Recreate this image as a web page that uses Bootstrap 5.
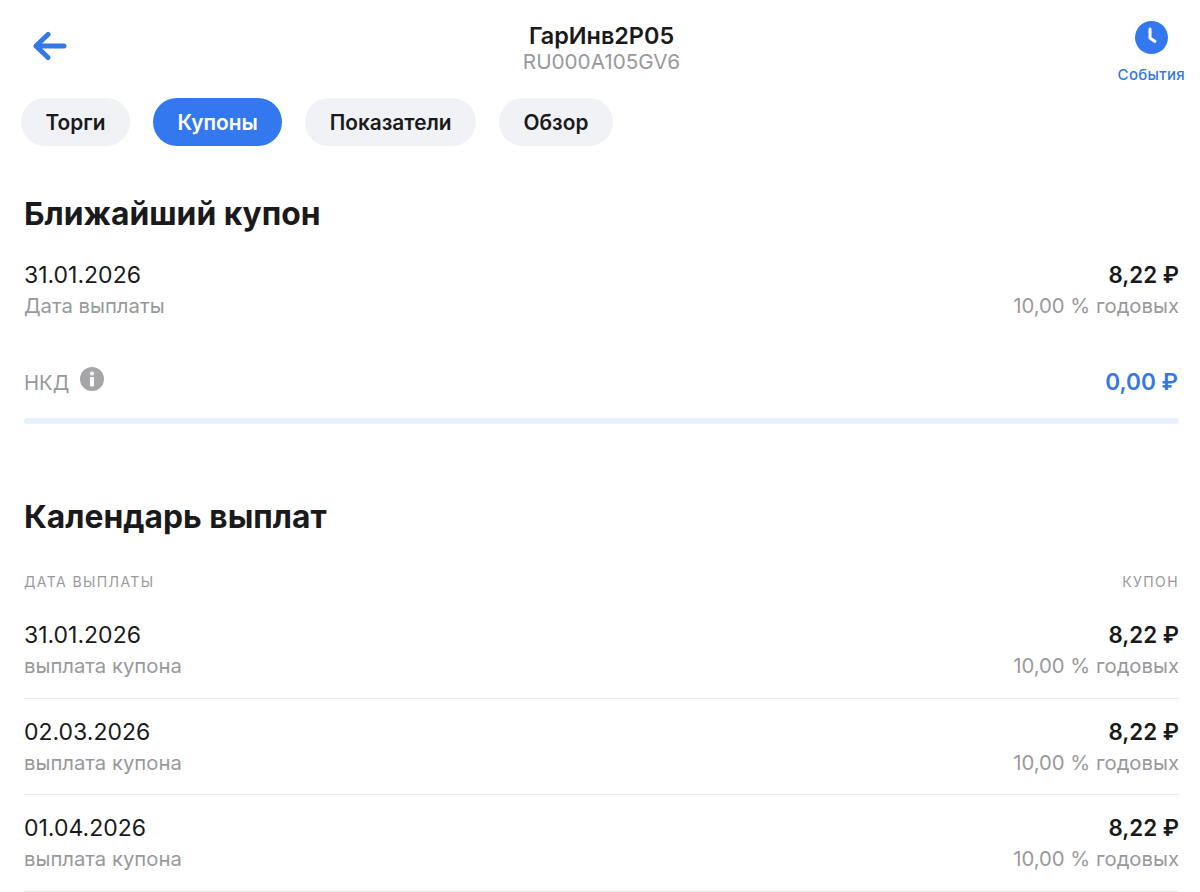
<!DOCTYPE html>
<html lang="ru">
<head>
  <meta charset="UTF-8" />
  <meta name="viewport" content="width=device-width, initial-scale=1" />
  <title>ГарИнв2Р05</title>
  <link href="https://cdn.jsdelivr.net/npm/bootstrap@5.3.3/dist/css/bootstrap.min.css" rel="stylesheet" />
  <style>
    body { font-family: Inter, "Noto Sans", sans-serif; color: #1a1a1c; background: #fff; height: 892px; overflow: hidden; }
    .top-bar { height: 98px; padding: 0 15px 0 32px; }
    .back-link { width: 36px; margin-top: 31px; }
    .title-box { top: 21px; left: 0; right: 0; padding-left: 3px; }
    .bond-name { font-size: 23.400px; font-weight: 600; line-height: 30px; }
    .bond-isin { font-size: 20.700px; line-height: 22px; color: #98999c; }
    .events-link { margin-top: 21px; color: #3478e5; font-size: 15px; font-weight: 500; letter-spacing: .3px; line-height: 18px; gap: 12px; }
    .tabs-row { gap: 23px; padding-left: 21px; height: 48px; }
    .tab-pill { height: 48px; padding: 1px 24.500px 0; border-radius: 24px; border: 0; background: #f1f2f5; color: #1a1a1c; font-size: 20.800px; font-weight: 600; }
    .tab-pill.on { background: #3478f0; color: #fff; }
    .page-body { padding: 0 21px 0 24px; }
    .block-title { font-size: 31.800px; font-weight: 700; line-height: 40px; margin: 0; }
    .near-title { margin-top: 48px; }
    .coupon-top { margin-top: 26px; }
    .cal-title { margin-top: 73px; }
    .main-line { font-size: 23px; line-height: 30px; }
    .sub-line { font-size: 20.300px; line-height: 31px; color: #98999c; }
    .money { font-size: 22.300px; font-weight: 600; }
    .nkd-row { margin-top: 41px; height: 40px; }
    .nkd-value { color: #3478e5; font-size: 22.600px; font-weight: 600; padding-right: 1px; }
    .info-dot { margin-left: 11px; margin-top: -7px; }
    .progress-line { height: 6px; margin-top: 16px; border-radius: 3px; background: #e8f0fc; }
    .head-row { font-size: 14px; line-height: 18px; letter-spacing: 1.400px; color: #98999c; margin-top: 36px; margin-bottom: 11px; }
    .pay-row { height: 96.700px; padding-top: 18px; border-bottom: 1px solid #e9e9eb; }
  </style>
</head>
<body>

<!-- Header -->
<header class="top-bar d-flex justify-content-between align-items-start position-relative">
  <a href="#" class="back-link d-block">
    <svg width="36" height="32" viewBox="0 0 36 32" fill="none" stroke="#3478e5" stroke-width="5" stroke-linecap="round" stroke-linejoin="round">
      <path d="M4 15H32M16 3.500L4 15L16 26.500"/>
    </svg>
  </a>
  <div class="title-box position-absolute text-center">
    <div class="bond-name">ГарИнв2Р05</div>
    <div class="bond-isin">RU000A105GV6</div>
  </div>
  <a href="#" class="events-link text-decoration-none text-center d-flex flex-column align-items-center position-relative">
    <svg width="33" height="33" viewBox="0 0 33 33">
      <circle cx="16.500" cy="16.500" r="16.500" fill="#3478f0"/>
      <path d="M15 8V17L20 20.500" fill="none" stroke="#fff" stroke-width="3" stroke-linecap="round" stroke-linejoin="round"/>
    </svg>
    <span>События</span>
  </a>
</header>

<!-- Tabs -->
<div class="tabs-row d-flex">
  <button class="tab-pill">Торги</button>
  <button class="tab-pill on">Купоны</button>
  <button class="tab-pill">Показатели</button>
  <button class="tab-pill">Обзор</button>
</div>

<main class="page-body">
  <h2 class="block-title near-title">Ближайший купон</h2>
  <div class="d-flex justify-content-between coupon-top">
    <div>
      <div class="main-line">31.01.2026</div>
      <div class="sub-line">Дата выплаты</div>
    </div>
    <div class="text-end">
      <div class="main-line money">8,22 ₽</div>
      <div class="sub-line">10,00 % годовых</div>
    </div>
  </div>

  <div class="nkd-row d-flex justify-content-between align-items-center">
    <div class="sub-line d-flex align-items-center">НКД
      <svg class="info-dot" width="24" height="24" viewBox="0 0 24 24">
        <circle cx="12" cy="12" r="12" fill="#a6a6a8"/>
        <circle cx="12" cy="6.500" r="2" fill="#fff"/>
        <rect x="10" y="10" width="4" height="9.500" rx="1" fill="#fff"/>
      </svg>
    </div>
    <div class="nkd-value">0,00 ₽</div>
  </div>
  <div class="progress-line"></div>

  <h2 class="block-title cal-title">Календарь выплат</h2>
  <div class="head-row d-flex justify-content-between text-uppercase">
    <span>Дата выплаты</span>
    <span>Купон</span>
  </div>

  <div id="payList"></div>
</main>

<script>
const payments = ["31.01.2026", "02.03.2026", "01.04.2026"];
const payList = document.getElementById("payList");
payments.forEach(date => {
  payList.insertAdjacentHTML("beforeend", `
    <div class="pay-row d-flex justify-content-between">
      <div>
        <div class="main-line">${date}</div>
        <div class="sub-line">выплата купона</div>
      </div>
      <div class="text-end">
        <div class="main-line money">8,22 ₽</div>
        <div class="sub-line">10,00 % годовых</div>
      </div>
    </div>`);
});
</script>

<script src="https://cdn.jsdelivr.net/npm/bootstrap@5.3.3/dist/js/bootstrap.bundle.min.js"></script>
</body>
</html>
